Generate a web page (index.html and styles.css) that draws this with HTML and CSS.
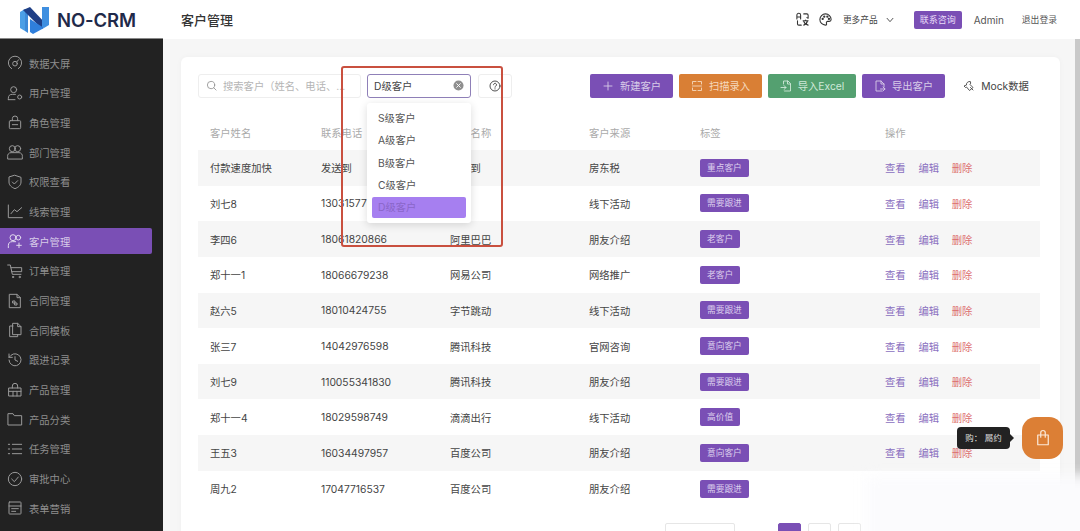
FILE: index.html
```html
<!DOCTYPE html>
<html lang="zh">
<head>
<meta charset="utf-8">
<title>NO-CRM 客户管理</title>
<link rel="stylesheet" href="styles.css">
</head>
<body>
<div class="app">
  <header class="topbar">
    <div class="brand">
      <svg class="logo" viewBox="0 0 31 29"><path d="M1 6 6 3v22l-5-3z" fill="#4b9fe6"/><path d="M6 3h3v24l-3-2z" fill="#3d8ad8"/><path d="M4 4l7-3 16 17-4 5z" fill="#1f3f86"/><path d="M23 1h7v18l-5 3-2-1z" fill="#3f8fe0"/><path d="M11 13l14 9-11 6-3-2z" fill="#2f7fdc"/></svg>
      <span class="brand-name">NO-CRM</span>
    </div>
    <h1 class="page-title">客户管理</h1>
    <div class="top-actions">
      <svg class="top-icon" viewBox="0 0 24 24"><path d="M3 11V5a3 3 0 0 1 6 0v6M3 8h6M14 3h5a2 2 0 0 1 2 2v5l-2-1M4 14v5a2 2 0 0 0 2 2h4M13 14h8M17 13v1M14 21c3-1 5-3 6-7M14 15c1 3 3 5 7 6"/></svg>
      <svg class="top-icon" viewBox="0 0 24 24"><path d="M12 3a9 9 0 1 0 0 18c2 0 2-1.500 1.500-3-.5-1.500.5-3 2-3H18a3 3 0 0 0 3-3c0-5-4-9-9-9z"/><circle cx="7.500" cy="11" r="1"/><circle cx="10" cy="7.500" r="1"/><circle cx="15" cy="7.500" r="1"/><circle cx="17.500" cy="11" r="1"/></svg>
      <span class="more">更多产品</span>
      <svg class="chev" viewBox="0 0 24 24"><path d="M5 8l7 8 7-8"/></svg>
      <span class="contact">联系咨询</span>
      <span class="admin">Admin</span>
      <span class="logout">退出登录</span>
    </div>
  </header>

  <div class="body-row">
    <nav class="sidebar">
      <a class="nav-item"><svg viewBox="0 0 24 24"><path d="M7 20.500a10 10 0 1 1 10 0"/><circle cx="12" cy="13" r="3.500"/><path d="M14.500 10.500l3-3.500"/></svg>数据大屏</a>
      <a class="nav-item"><svg viewBox="0 0 24 24"><circle cx="10" cy="7" r="4.500"/><path d="M2 22v-2a6 6 0 0 1 6-6h4a4 4 0 0 1 1 .2M2 22h10"/><circle cx="19" cy="18" r="3"/></svg>用户管理</a>
      <a class="nav-item"><svg viewBox="0 0 24 24"><rect x="3.500" y="10" width="17" height="12" rx="1.500"/><path d="M8 10V7a4 4 0 0 1 8 0v3M8 16h8"/></svg>角色管理</a>
      <a class="nav-item"><svg viewBox="0 0 24 24"><circle cx="8" cy="7" r="4.500"/><circle cx="16" cy="7" r="4.500"/><path d="M1 22v-3a5 5 0 0 1 5-6h12a5 5 0 0 1 5 6v3z"/></svg>部门管理</a>
      <a class="nav-item"><svg viewBox="0 0 24 24"><path d="M12 2l9 3v7c0 5-4 8-9 10-5-2-9-5-9-10V5z"/><path d="M8 12l3 3 5-5"/></svg>权限查看</a>
      <a class="nav-item"><svg viewBox="0 0 24 24"><path d="M2 3v19h21M6 16l5-6 4 3 7-6"/></svg>线索管理</a>
      <a class="nav-item active"><svg viewBox="0 0 24 24"><circle cx="9" cy="7" r="4.500"/><circle cx="17" cy="7" r="3.500"/><path d="M2 22v-3a6 6 0 0 1 6-6h5M18 15v7M14.500 18.500h7"/></svg>客户管理</a>
      <a class="nav-item"><svg viewBox="0 0 24 24"><path d="M1 3h4l3 14h13M6 7h16v6H7"/><circle cx="9" cy="21" r="1"/><circle cx="19" cy="21" r="1"/></svg>订单管理</a>
      <a class="nav-item"><svg viewBox="0 0 24 24"><path d="M4 2h11l5 5v15H4zM15 2v5h5M9 12h3v3H9zM12 15h3v3h-3z"/></svg>合同管理</a>
      <a class="nav-item"><svg viewBox="0 0 24 24"><path d="M9 2h7l5 5v12H9zM16 2v5h5M9 6H4v16h12v-3"/></svg>合同模板</a>
      <a class="nav-item"><svg viewBox="0 0 24 24"><path d="M3 12a9 9 0 1 0 3-7L3 8V3M3 8h5M12 7v5l4 2"/></svg>跟进记录</a>
      <a class="nav-item"><svg viewBox="0 0 24 24"><path d="M3 9h18v12H3zM8 9V6a4 4 0 0 1 8 0v3M9 21v-7h6v7M3 14h6M15 14h6"/></svg>产品管理</a>
      <a class="nav-item"><svg viewBox="0 0 24 24"><path d="M2 4h7l2 3h11v14H2z"/></svg>产品分类</a>
      <a class="nav-item"><svg viewBox="0 0 24 24"><path d="M8 5h14M8 12h14M8 19h14M2 5h2M2 12h2M2 19h2"/></svg>任务管理</a>
      <a class="nav-item"><svg viewBox="0 0 24 24"><circle cx="12" cy="12" r="10"/><path d="M7 12l4 4 6-7"/></svg>审批中心</a>
      <a class="nav-item"><svg viewBox="0 0 24 24"><rect x="3" y="3" width="18" height="18" rx="1"/><path d="M3 9h18M7 13h10M7 17h6"/></svg>表单营销</a>
    </nav>

    <main class="content">
      <section class="card">
        <div class="toolbar">
          <div class="search">
            <svg class="search-icon" viewBox="0 0 24 24"><circle cx="11" cy="11" r="8"/><path d="M17 17l5 5"/></svg>
            <span class="placeholder">搜索客户（姓名、电话、...</span>
          </div>
          <div class="select">
            <span>D级客户</span>
            <svg class="clear" viewBox="0 0 24 24"><circle cx="12" cy="12" r="11"/><path d="M8 8l8 8M16 8l-8 8"/></svg>
          </div>
          <div class="help"><svg viewBox="0 0 24 24"><circle cx="12" cy="12" r="10"/><path d="M9 9.500a3 3 0 1 1 4.500 2.600c-1 .6-1.500 1.200-1.500 2.400M12 17.500v.5"/></svg></div>
          <div class="btns">
            <button class="btn purple"><svg viewBox="0 0 24 24"><path d="M12 4v16M4 12h16"/></svg>新建客户</button>
            <button class="btn orange"><svg viewBox="0 0 24 24"><path d="M3 8V3h7M14 3h7v5M3 16v5h7M14 21h7v-5M3 12h18"/></svg>扫描录入</button>
            <button class="btn green"><svg viewBox="0 0 24 24"><path d="M7 8V2h9l5 5v15H9M15 2v6h6M2 15h10M8 11l4 4-4 4"/></svg>导入Excel</button>
            <button class="btn purple"><svg viewBox="0 0 24 24"><path d="M16 22H4V2h10l6 6v6M14 2v6h6M13 18h9M18 14l4 4-4 4"/></svg>导出客户</button>
            <button class="btn ghost"><svg viewBox="0 0 24 24"><path d="M14 3a6 6 0 0 0-7 7l-5 2 3 3 2-1 6 7 7-6-6-6 1-2zM15 15l5 5"/></svg>Mock数据</button>
          </div>
        </div>

        <div class="table">
          <div class="row head"><span>客户姓名</span><span>联系电话</span><span>公司名称</span><span>客户来源</span><span>标签</span><span>操作</span></div>
          <div class="row"><span>付款速度加快</span><span>发送到</span><span>发送到</span><span>房东税</span><span><i class="tag">重点客户</i></span><span class="ops"><a>查看</a><a>编辑</a><a class="del">删除</a></span></div>
          <div class="row"><span>刘七8</span><span class="clip">13031577</span><span></span><span>线下活动</span><span><i class="tag">需要跟进</i></span><span class="ops"><a>查看</a><a>编辑</a><a class="del">删除</a></span></div>
          <div class="row"><span>李四6</span><span>18061820866</span><span>阿里巴巴</span><span>朋友介绍</span><span><i class="tag">老客户</i></span><span class="ops"><a>查看</a><a>编辑</a><a class="del">删除</a></span></div>
          <div class="row"><span>郑十一1</span><span>18066679238</span><span>网易公司</span><span>网络推广</span><span><i class="tag">老客户</i></span><span class="ops"><a>查看</a><a>编辑</a><a class="del">删除</a></span></div>
          <div class="row"><span>赵六5</span><span>18010424755</span><span>字节跳动</span><span>线下活动</span><span><i class="tag">需要跟进</i></span><span class="ops"><a>查看</a><a>编辑</a><a class="del">删除</a></span></div>
          <div class="row"><span>张三7</span><span>14042976598</span><span>腾讯科技</span><span>官网咨询</span><span><i class="tag">意向客户</i></span><span class="ops"><a>查看</a><a>编辑</a><a class="del">删除</a></span></div>
          <div class="row"><span>刘七9</span><span>110055341830</span><span>腾讯科技</span><span>朋友介绍</span><span><i class="tag">需要跟进</i></span><span class="ops"><a>查看</a><a>编辑</a><a class="del">删除</a></span></div>
          <div class="row"><span>郑十一4</span><span>18029598749</span><span>滴滴出行</span><span>线下活动</span><span><i class="tag">高价值</i></span><span class="ops"><a>查看</a><a>编辑</a><a class="del">删除</a></span></div>
          <div class="row"><span>王五3</span><span>16034497957</span><span>百度公司</span><span>朋友介绍</span><span><i class="tag">意向客户</i></span><span class="ops"><a>查看</a><a>编辑</a><a class="del">删除</a></span></div>
          <div class="row"><span>周九2</span><span>17047716537</span><span>百度公司</span><span>朋友介绍</span><span><i class="tag">需要跟进</i></span></div>
        </div>

        <div class="pager">
          <span class="page-size"></span>
          <span class="page current"></span>
          <span class="page"></span>
          <span class="page"></span>
        </div>
      </section>
    </main>
    <div class="scrollbar"></div>
  </div>

  <div class="glow"></div>
  <div class="dropdown">
    <div class="opt">S级客户</div>
    <div class="opt">A级客户</div>
    <div class="opt">B级客户</div>
    <div class="opt">C级客户</div>
    <div class="opt chosen">D级客户</div>
  </div>
  <div class="annotation"></div>
  <div class="tooltip">购： 屬约</div>
  <div class="fab"><svg viewBox="0 0 24 24"><path d="M5 8h14v13H5zM9 11V5a3 3 0 0 1 6 0v6"/></svg></div>
</div>
</body>
</html>
```
FILE: styles.css
```css
* { box-sizing: border-box; }
html, body { margin: 0; height: 100%; }
body { font-family: Inter, "Noto Sans CJK SC", sans-serif; font-size: 10.3px; color: #444; background: #fff; overflow: hidden; }
svg { fill: none; stroke: currentColor; stroke-width: 1.7; stroke-linecap: round; stroke-linejoin: round; flex: none; }
a { cursor: pointer; }
i { font-style: normal; }

.app { position: relative; width: 1080px; height: 531px; overflow: hidden; }

.topbar { height: 39px; display: flex; align-items: center; background: #fff; }
.brand { width: 181px; display: flex; align-items: center; padding-left: 19px; gap: 7px; flex: none; }
.logo { width: 31px; height: 29px; stroke: none; margin-top: 2px; }
.brand-name { font-size: 18.5px; font-weight: 600; color: #1f2a4a; letter-spacing: -.1px; }
.page-title { margin: 0; font-size: 13px; font-weight: 500; color: #333; }
.top-actions { margin-left: auto; display: flex; align-items: center; padding-right: 23px; color: #444; }
.top-icon { width: 15px; height: 15px; stroke-width: 1.700; color: #333; margin-right: 8px; }
.top-icon + .top-icon { margin-right: 10px; }
.more { font-size: 8.700px; }
.chev { width: 10px; height: 10px; margin: 0 19px 0 7px; stroke-width: 2.200; }
.contact { background: #7a4fb5; color: #e8dcf8; font-size: 9px; height: 18px; line-height: 18px; padding: 0 6px; border-radius: 2px; margin-right: 12px; }
.admin { font-size: 10px; color: #555; margin-right: 18px; }
.logout { font-size: 8.800px; color: #555; }

.body-row { display: flex; height: 492px; background: #f6f6f6; }
.sidebar { width: 163px; flex: none; background: #222; padding: 11px 11px 0 0; box-shadow: 0 -1px 0 #888; }
.nav-item { display: flex; align-items: center; gap: 6px; height: 26px; margin-bottom: 3.700px; padding-left: 7px; color: #8e8e8e; font-size: 10.300px; border-radius: 0 2px 2px 0; }
.nav-item svg { width: 16px; height: 16px; color: #9a9a9a; stroke-width: 1.500; }
.nav-item.active { background: #7a4fb5; color: #d8cce8; }
.nav-item.active svg { color: #e0d8ee; }

.content { flex: 1; padding: 18px 15px 0 18px; min-width: 0; }
.card { height: 500px; background: #fff; border-radius: 6px; padding: 17px 20px 0 17px; box-shadow: 0 0 6px rgba(0,0,0,.03); }

.toolbar { display: flex; align-items: center; height: 24px; }
.search { width: 163px; height: 24px; border: 1px solid #eee; border-radius: 3px; display: flex; align-items: center; padding: 0 0 1px 7px; gap: 6px; color: #aaa; margin-right: 6px; }
.search-icon { width: 11px; height: 11px; color: #888; }
.placeholder { white-space: nowrap; overflow: hidden; font-size: 10.300px; color: #b5b5b5; }
.select { width: 104px; height: 24px; border: 1px solid #8f80b8; border-radius: 3px; display: flex; align-items: center; justify-content: space-between; padding: 0 6px 1px 6px; color: #444; margin-right: 7px; }
.clear { width: 11px; height: 11px; fill: #8f8f8f; stroke: #fff; stroke-width: 2; }
.clear circle { stroke: none; }
.help { width: 34px; height: 24px; border: 1px solid #eee; border-radius: 3px; display: flex; align-items: center; justify-content: center; color: #333; }
.help svg { width: 12px; height: 12px; stroke-width: 1.700; }
.btns { margin-left: auto; display: flex; gap: 6px; align-items: center; }
.btn { height: 24px; border: 0; border-radius: 2px; display: flex; align-items: center; justify-content: center; gap: 6px; padding: 0 0 1px; font: inherit; font-size: 10.300px; width: 83px; }
.btn svg { width: 12px; height: 12px; stroke-width: 1.800; }
.btn:nth-child(3) { width: 88px; }
.purple { background: #7a4fb5; color: #d8cce8; }
.orange { background: #d97f35; color: #f5d9bd; }
.green { background: #54a070; color: #cfe8d8; }
.btn.ghost { background: transparent; color: #444; width: 85px; margin-left: 4px; padding-right: 3px; }

.table { margin-top: 24px; }
.row { display: grid; grid-template-columns: 111px 129px 139px 111px 185px 1fr; height: 35.650px; align-items: center; padding-left: 12px; color: #444; white-space: nowrap; }
.row:nth-child(even) { background: #f6f6f6; }
.row.head { height: 28px; color: #aaa; padding-bottom: 8px; }
.tag { display: inline-block; background: #7a4fb5; color: #ddd0ee; font-size: 8.700px; height: 18px; line-height: 18px; padding: 0 7px; border-radius: 2px; vertical-align: middle; }
.ops { display: flex; gap: 12.800px; color: #8a6fc0; }
.del { color: #dc6f6f; }

.pager { display: flex; margin-top: 17px; padding-left: 467px; }
.page-size { width: 70px; height: 20px; border: 1px solid #e6e6e6; border-radius: 2px; margin-right: 43px; }
.page { width: 23px; height: 20px; border: 1px solid #e6e6e6; border-radius: 2px; margin-right: 7px; background: #fff; }
.page.current { background: #7a4fb5; border-color: #7a4fb5; }

.scrollbar { width: 5px; flex: none; background: linear-gradient(#c9c9c9 0 430px, transparent 460px); }

.glow { position: absolute; left: 866px; top: 476px; width: 240px; height: 80px; background: #fbfbfd; filter: blur(7px); }
.dropdown { position: absolute; left: 367px; top: 103px; width: 104px; height: 120px; background: #fff; border-radius: 3px; box-shadow: 0 2px 8px rgba(0,0,0,.14); padding: 4px 5px; }
.opt { height: 22.300px; line-height: 22.300px; padding-left: 6px; color: #555; }
.opt.chosen { background: #a67ff0; color: #8a66c8; border-radius: 2px; height: 21px; line-height: 21px; margin-top: 1px; }
.annotation { position: absolute; left: 341px; top: 66px; width: 162px; height: 181px; border: 2px solid #c9503f; border-radius: 3px; }
.tooltip { position: absolute; left: 957px; top: 427px; width: 53px; height: 22px; background: #222; color: #ddd; font-size: 8.500px; line-height: 22px; text-align: center; border-radius: 4px; white-space: nowrap; }
.tooltip::after { content: ""; position: absolute; right: -4px; top: 7px; border-left: 4px solid #222; border-top: 4px solid transparent; border-bottom: 4px solid transparent; }
.fab { position: absolute; left: 1022px; top: 417px; width: 41px; height: 42px; border-radius: 14px; background: #dc7f35; display: flex; align-items: center; justify-content: center; color: #fbeadb; }
.fab svg { width: 18px; height: 18px; stroke-width: 1.600; }
```
